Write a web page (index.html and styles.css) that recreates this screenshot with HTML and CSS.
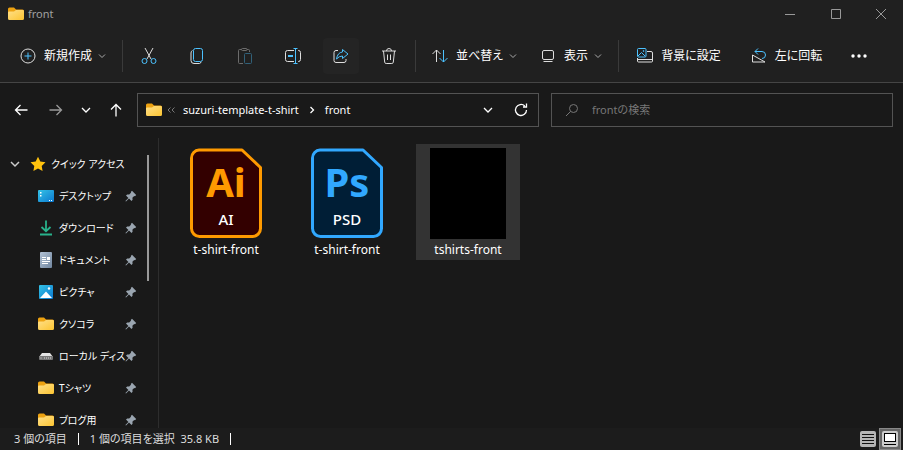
FILE: index.html
```html
<!DOCTYPE html>
<html lang="ja">
<head>
<meta charset="utf-8">
<title>front</title>
<link rel="stylesheet" href="styles.css">
</head>
<body>
<svg class="defs" aria-hidden="true">
  <defs>
    <linearGradient id="gold" x1="0" y1="0" x2="1" y2="1"><stop offset="0" stop-color="#ffe08a"/><stop offset="1" stop-color="#fcc431"/></linearGradient>
    <linearGradient id="blue" x1="0" y1="0" x2="1" y2="1"><stop offset="0" stop-color="#35c3e6"/><stop offset="1" stop-color="#0b78cf"/></linearGradient>
    <linearGradient id="paper" x1="0" y1="0" x2="1" y2="1"><stop offset="0" stop-color="#b3c3d6"/><stop offset="1" stop-color="#71869f"/></linearGradient>
  </defs>
  <symbol id="folder" viewBox="0 0 16 16"><path d="M0 3a1.5 1.5 0 0 1 1.500-1.500h4.500L8 3.500h6.500A1.500 1.500 0 0 1 16 5v4H0z" fill="#eda211"/><path d="M0 6.500a1 1 0 0 1 1-1h5l2-1.500h6.800A1.200 1.200 0 0 1 16 5.200v7.300a1.500 1.500 0 0 1-1.500 1.500h-13A1.500 1.500 0 0 1 0 12.500z" fill="url(#gold)"/></symbol>
  <symbol id="chevron" viewBox="0 0 8 8"><path d="M1 2.500l3 3 3-3" fill="none" stroke="currentColor"/></symbol>
  <symbol id="pin" viewBox="0 0 12 12"><path d="M7 .8L11.200 5 10 6.200l-.8-.2-1.800 1.800.2 2L6.500 11 4 8.500 1 11.500l-.6-.6 3-3L1 5.500l1.200-1 2 .1L6 2.800 5.800 2z" fill="#9aa5b0"/></symbol>
</svg>
<div class="window">
  <header class="titlebar">
    <svg class="icon"><use href="#folder"/></svg>
    <h1>front</h1>
    <button aria-label="最小化"><svg class="icon-s" viewBox="0 0 12 12"><path d="M1 6.500h10"/></svg></button>
    <button aria-label="最大化"><svg class="icon-s" viewBox="0 0 12 12"><path d="M1.500 1.500h9v9h-9z"/></svg></button>
    <button aria-label="閉じる"><svg class="icon-s" viewBox="0 0 12 12"><path d="M1 1l10 10M11 1L1 11"/></svg></button>
  </header>

  <div class="toolbar">
    <button class="tool new"><svg class="icon" viewBox="0 0 16 16"><circle cx="8" cy="8" r="7"/><path class="accent" d="M8 4.500v7M4.500 8h7"/></svg><span>新規作成</span><svg class="chev"><use href="#chevron"/></svg></button>
    <div class="group edit">
      <button class="square" aria-label="切り取り"><svg class="icon" viewBox="0 0 16 16"><path d="M4 0l6 11M12 0L6 11"/><circle class="accent" cx="3.500" cy="13" r="2.500"/><circle class="accent" cx="12.500" cy="13" r="2.500"/></svg></button>
      <button class="square" aria-label="コピー"><svg class="icon" viewBox="0 0 16 16"><path d="M3.500 2.500Q2 3 2 5v7.500A3 3 0 0 0 5 15.500h5.500q1 0 1.500-1.500"/><rect class="accent" x="4.500" y=".5" width="9" height="13" rx="2"/></svg></button>
      <button class="square faded" aria-label="貼り付け"><svg class="icon" viewBox="0 0 16 16"><path d="M6 15.500H2.500a1 1 0 0 1-1-1v-12a1 1 0 0 1 1-1H4.500M10 1.500h1.500a1 1 0 0 1 1 1V4"/><rect x="4.500" y=".5" width="5.500" height="2" rx="1"/><rect class="accent" x="7.500" y="5.500" width="7" height="10" rx="1"/></svg></button>
      <button class="square" aria-label="名前の変更"><svg class="icon" viewBox="0 0 16 16"><path d="M9 2.500H2.500a2 2 0 0 0-2 2v7a2 2 0 0 0 2 2H9M13 2.500h.5a2 2 0 0 1 2 2v7a2 2 0 0 1-2 2H13"/><path class="accent" d="M8.500.5h4M8.500 15.500h4M10.500.5v15"/><path class="accent" stroke-width="2" d="M3 8h5"/></svg></button>
      <button class="square hover" aria-label="共有"><svg class="icon" viewBox="0 0 16 16"><path d="M5 2.500H3a2 2 0 0 0-2 2v8a2 2 0 0 0 2 2h8a2 2 0 0 0 2-2V11"/><path class="accent" d="M9.500 1.500L15 6l-5.500 4.500V8Q6 8 3.500 11 4.500 4.500 9.500 4z"/></svg></button>
      <button class="square" aria-label="削除"><svg class="icon" viewBox="0 0 16 16"><path d="M1 3h14M5.500 3a2.500 2.500 0 0 1 5 0M2.500 3l1.200 11.200a1.500 1.500 0 0 0 1.500 1.300h5.600a1.500 1.500 0 0 0 1.500-1.300L13.500 3M6.500 6.500V12M9.500 6.500V12"/></svg></button>
    </div>
    <div class="group views">
      <button class="tool"><svg class="icon" viewBox="0 0 16 16"><path d="M4.500 14V2M.5 6l4-4 4 4"/><path class="accent" d="M11.500 2v12M7.500 10l4 4 4-4"/></svg><span>並べ替え</span><svg class="chev"><use href="#chevron"/></svg></button>
      <button class="tool"><svg class="icon" viewBox="0 0 16 16"><rect x="2.500" y="2.500" width="11" height="9" rx="1.500"/><path d="M3.500 13.500h9"/></svg><span>表示</span><svg class="chev"><use href="#chevron"/></svg></button>
    </div>
    <button class="tool wallpaper"><svg class="icon" viewBox="0 0 16 16"><path d="M10 3.500h4a1.500 1.500 0 0 1 1.500 1.500v8a1 1 0 0 1-1 1h-13a1 1 0 0 1-1-1V10M.5 11.500h15"/><rect class="accent" x=".5" y=".5" width="8.500" height="8.500" rx="1"/><path class="accent" d="M1 8l3.500-3.500L8 8"/><circle class="accent" cx="6.500" cy="3" r=".5"/></svg><span>背景に設定</span></button>
    <button class="tool"><svg class="icon" viewBox="0 0 16 16"><path class="accent" d="M7 .5l-3 3 3 3M4 3.500h7a3.500 3.500 0 0 1 0 7"/><path d="M1.500 7v7h12.500z"/></svg><span>左に回転</span></button>
    <button class="more" aria-label="もっと見る"><svg viewBox="0 0 18 6"><circle cx="3" cy="3" r="1.700"/><circle cx="9" cy="3" r="1.700"/><circle cx="15" cy="3" r="1.700"/></svg></button>
  </div>

  <nav class="navbar" aria-label="アドレス">
    <button class="arrow" aria-label="戻る"><svg viewBox="0 0 14 14"><path d="M13.500 7H1.500M6.500 2l-5 5 5 5"/></svg></button>
    <button class="arrow dim" aria-label="進む"><svg viewBox="0 0 14 14"><path d="M.5 7h12M7.500 2l5 5-5 5"/></svg></button>
    <button class="arrow" aria-label="最近表示した場所"><svg viewBox="0 0 14 14"><path d="M3 5l4 4 4-4"/></svg></button>
    <button class="arrow" aria-label="上へ"><svg viewBox="0 0 14 14"><path d="M7 13.500V1.500M2 6.500l5-5 5 5"/></svg></button>
    <div class="address">
      <svg class="icon"><use href="#folder"/></svg>
      <svg class="back" viewBox="0 0 10 8"><path d="M4.500 1.500L2 4l2.500 2.500M8.500 1.500L6 4l2.500 2.500"/></svg>
      <a href="#">suzuri-template-t-shirt</a>
      <svg class="sep" viewBox="0 0 8 8"><path d="M2.500 1l3 3-3 3"/></svg>
      <a href="#">front</a>
      <button class="history" aria-label="以前の場所"><svg viewBox="0 0 14 14"><path d="M3 5l4 4 4-4"/></svg></button>
      <button aria-label="更新"><svg viewBox="0 0 14 14"><path d="M12.500 7a5.500 5.500 0 1 1-1.700-4M12.500 .5v3.500H9"/></svg></button>
    </div>
    <label class="search">
      <svg viewBox="0 0 14 14"><circle cx="8.500" cy="5.500" r="4"/><path d="M5.500 8.500L1 13"/></svg>
      <input type="search" placeholder="frontの検索" aria-label="frontの検索">
    </label>
  </nav>

  <div class="content">
    <aside class="sidebar">
      <button class="quick"><svg class="toggle" viewBox="0 0 14 14"><path d="M3 5l4 4 4-4"/></svg><svg class="icon" viewBox="0 0 16 16"><path d="M8 .8l2.300 4.700 5.200.8-3.800 3.600.9 5.200L8 12.600l-4.600 2.500.9-5.200L.5 6.300l5.200-.8z" fill="#ffc20e"/></svg><span>クイック アクセス</span></button>
      <ul>
        <li><a href="#"><svg class="icon" viewBox="0 0 16 16"><rect y="2" width="16" height="12" rx="1" fill="url(#blue)"/><path d="M2 4h1.500v1.500H2zM2 7h1.500v1.500H2zM11 12h1v1h-1zM13 12h1v1h-1z" fill="#fff"/></svg><span>デスクトップ</span><svg class="pin"><use href="#pin"/></svg></a></li>
        <li><a href="#"><svg class="icon" viewBox="0 0 16 16"><path d="M8 .5v10.500M3.500 7L8 11.200 12.500 7M2 14.500h12" fill="none" stroke="#28b28b" stroke-width="1.800"/></svg><span>ダウンロード</span><svg class="pin"><use href="#pin"/></svg></a></li>
        <li><a href="#"><svg class="icon" viewBox="0 0 16 16"><rect x="2" width="12" height="16" rx="1" fill="url(#paper)"/><path d="M4 5.500h4M4 7.500h4M4 9.500h8M4 11.500h6" stroke="#fff"/><path d="M9 5h3v3H9z" fill="#fff"/></svg><span>ドキュメント</span><svg class="pin"><use href="#pin"/></svg></a></li>
        <li><a href="#"><svg class="icon" viewBox="0 0 16 16"><rect x="1" y="1" width="14" height="14" rx="1" fill="url(#blue)"/><path d="M2 14l6-6.500 6 6.500z" fill="#fff"/><circle cx="11" cy="4.500" r="1.200" fill="#fff"/></svg><span>ピクチャ</span><svg class="pin"><use href="#pin"/></svg></a></li>
        <li><a href="#"><svg class="icon"><use href="#folder"/></svg><span>クソコラ</span><svg class="pin"><use href="#pin"/></svg></a></li>
        <li><a href="#"><svg class="icon" viewBox="0 0 16 16"><path d="M4 5h8l3 4H1z" fill="#e4e4e4"/><rect x="1" y="8" width="14" height="4" rx="1" fill="#777"/><path d="M2.500 10h2M6 10h7" stroke="#ddd" stroke-dasharray="1 1"/></svg><span>ローカル ディス</span><svg class="pin"><use href="#pin"/></svg></a></li>
        <li><a href="#"><svg class="icon"><use href="#folder"/></svg><span>Tシャツ</span><svg class="pin"><use href="#pin"/></svg></a></li>
        <li><a href="#"><svg class="icon"><use href="#folder"/></svg><span>ブログ用</span><svg class="pin"><use href="#pin"/></svg></a></li>
      </ul>
      <div class="thumb"></div>
    </aside>
    <main class="files">
      <figure class="file">
        <svg class="doc" viewBox="0 0 72 90"><path d="M9 1.500H52L70.500 19V80a8 8 0 0 1-8 8H9.500a8 8 0 0 1-8-8V9.500a8 8 0 0 1 7.500-8z" fill="#300" stroke="#ff9a00" stroke-width="3" stroke-linejoin="round"/><text class="logo" x="36" y="48" fill="#ff9a00">Ai</text><text class="kind" x="36" y="76">AI</text></svg>
        <figcaption>t-shirt-front</figcaption>
      </figure>
      <figure class="file">
        <svg class="doc" viewBox="0 0 72 90"><path d="M9 1.500H52L70.500 19V80a8 8 0 0 1-8 8H9.500a8 8 0 0 1-8-8V9.500a8 8 0 0 1 7.500-8z" fill="#001e36" stroke="#31a8ff" stroke-width="3" stroke-linejoin="round"/><text class="logo" x="36" y="48" fill="#31a8ff">Ps</text><text class="kind" x="36" y="76">PSD</text></svg>
        <figcaption>t-shirt-front</figcaption>
      </figure>
      <figure class="file selected">
        <div class="preview"></div>
        <figcaption>tshirts-front</figcaption>
      </figure>
    </main>
  </div>

  <footer class="status">
    <span>3 個の項目</span><i></i><span>1 個の項目を選択&nbsp; 35.8 KB</span><i></i>
    <button class="view details" aria-label="詳細"><svg viewBox="0 0 16 16"><rect width="16" height="16" rx="2" fill="#b5b5b5"/><path d="M2 3.500h12M2 6.500h12M2 9.500h12M2 12.500h12" stroke="#111"/></svg></button>
    <button class="view active" aria-label="大アイコン"><svg viewBox="0 0 16 16"><rect width="16" height="16" rx="2" fill="#ccc"/><rect x="2.500" y="2.500" width="11" height="8" fill="#fff" stroke="#000"/><path d="M2 13.500h12" stroke="#000"/></svg></button>
  </footer>
</div>
</body>
</html>
```
FILE: styles.css
```css
* { box-sizing: border-box; }
body {
  margin: 0;
  background: #191919;
  color: #fff;
  font: 12px/16px "Noto Sans", "Noto Sans CJK JP", sans-serif;
  font-feature-settings: "palt";
}
button, input { font: inherit; font-feature-settings: inherit; color: inherit; background: none; border: 0; padding: 0; }
button { display: flex; align-items: center; justify-content: center; }
a { color: inherit; text-decoration: none; }
svg { display: block; flex: none; }
span, a { white-space: nowrap; }
.defs { position: absolute; width: 0; height: 0; }
.icon { width: 16px; height: 16px; }
.window { display: flex; flex-direction: column; height: 100vh; }

.titlebar { display: flex; align-items: center; height: 28px; padding-left: 8px; background: #202020; color: #a0a0a0; }
.titlebar h1 { flex: 1; margin: 0 0 0 4px; font-size: 11px; font-weight: 400; }
.titlebar button { width: 46px; height: 28px; }
.titlebar button:last-child { width: 44px; }
.icon-s { width: 12px; height: 12px; fill: none; stroke: #999; }

.toolbar { display: flex; align-items: center; height: 55px; padding: 2px 0 0 20px; background: #202020; border-bottom: 1px solid #454545; }
.toolbar .icon { fill: none; stroke: #ddd; }
.toolbar .accent { stroke: #4cc2ff; }
.tool { gap: 8px; height: 36px; }
.chev { width: 8px; height: 8px; margin-left: -2px; color: #aaa; }
.new { width: 102px; justify-content: flex-start; }
.group { display: flex; align-items: center; height: 32px; border-left: 1px solid #3a3a3a; border-right: 1px solid #3a3a3a; }
.edit { gap: 12px; padding: 0 8px; }
.square { width: 36px; height: 36px; border-radius: 4px; }
.hover { background: #242424; }
.faded { opacity: .4; }
.views { gap: 23px; padding: 0 16px; border-left: 0; }
.wallpaper { margin: 0 30px 0 18px; }
.more { width: 36px; height: 36px; margin-left: 19px; }
.more svg { width: 18px; height: 6px; fill: #fff; }

.navbar { display: flex; align-items: center; height: 55px; padding: 0 10px 2px 14px; font-size: 11px; }
.navbar svg:not(.icon) { width: 14px; height: 14px; fill: none; stroke: #fff; stroke-width: 1.3; }
.arrow { width: 14px; height: 32px; margin-right: 21px; }
.arrow:nth-child(2), .arrow:nth-child(3) { margin-right: 16px; }
.arrow:nth-child(4) { margin-right: 14px; }
.navbar .dim svg { stroke: #999; }
.address { display: flex; flex: 382; align-items: center; height: 34px; padding: 0 10px 0 8px; border: 1px solid #535353; }
.navbar .address .back { width: 10px; height: 8px; margin: 0 7px 0 4px; stroke: #777; stroke-width: 1; }
.navbar .address .sep { width: 8px; height: 8px; margin: 0 9px; }
.history { margin-left: auto; margin-right: 19px; }
.search { display: flex; flex: 314; align-items: center; gap: 13px; height: 34px; margin-left: 12px; padding: 0 13px; border: 1px solid #535353; }
.navbar .search svg { stroke: #777; stroke-width: 1; }
.search input { flex: 1; min-width: 0; outline: 0; }
.search input::placeholder { color: #777; opacity: 1; }

.content { display: flex; flex: 1; min-height: 0; }
.sidebar { position: relative; width: 159px; padding-top: 10px; overflow: hidden; border-right: 1px solid #2d2d2d; font-size: 10px; }
.quick { height: 32px; padding-left: 8px; }
.toggle { width: 14px; height: 14px; margin-right: 8px; fill: none; stroke: #ccc; stroke-width: 1.5; }
.quick span { margin-left: 5px; }
.sidebar ul { margin: 0; padding: 0; list-style: none; }
.sidebar li a { display: flex; align-items: center; height: 32px; padding: 0 21px 0 38px; }
.sidebar li span { flex: 1; min-width: 0; margin-left: 5px; }
.pin { width: 12px; height: 12px; }
.thumb { position: absolute; top: 17px; right: 9px; width: 2px; height: 126px; background: #999; }

.files { display: flex; flex: 1; align-items: flex-start; gap: 17px; padding: 6px 15px; }
.file { display: flex; flex-direction: column; align-items: center; width: 104px; height: 116px; margin: 0; padding-top: 4px; }
.doc { width: 72px; height: 91px; }
.doc text { text-anchor: middle; font-family: "Noto Sans", sans-serif; }
.doc .logo { font-size: 40px; font-weight: 700; }
.doc .kind { font-size: 15px; font-weight: 500; fill: #fff; }
.file figcaption { margin-top: 3px; }
.selected { background: #333; }
.preview { width: 76px; height: 91px; background: #000; }

.status { display: flex; align-items: center; height: 22px; padding-left: 14px; color: #ddd; background: #1c1c1c; font-size: 11px; }
.status i { width: 1px; height: 12px; margin: 0 11px; background: #fff; }
.view { width: 22px; height: 22px; }
.view svg { width: 16px; height: 16px; }
.details { margin-left: auto; }
.active { margin-right: 2px; background: #666; border: 1px solid #888; }
```
